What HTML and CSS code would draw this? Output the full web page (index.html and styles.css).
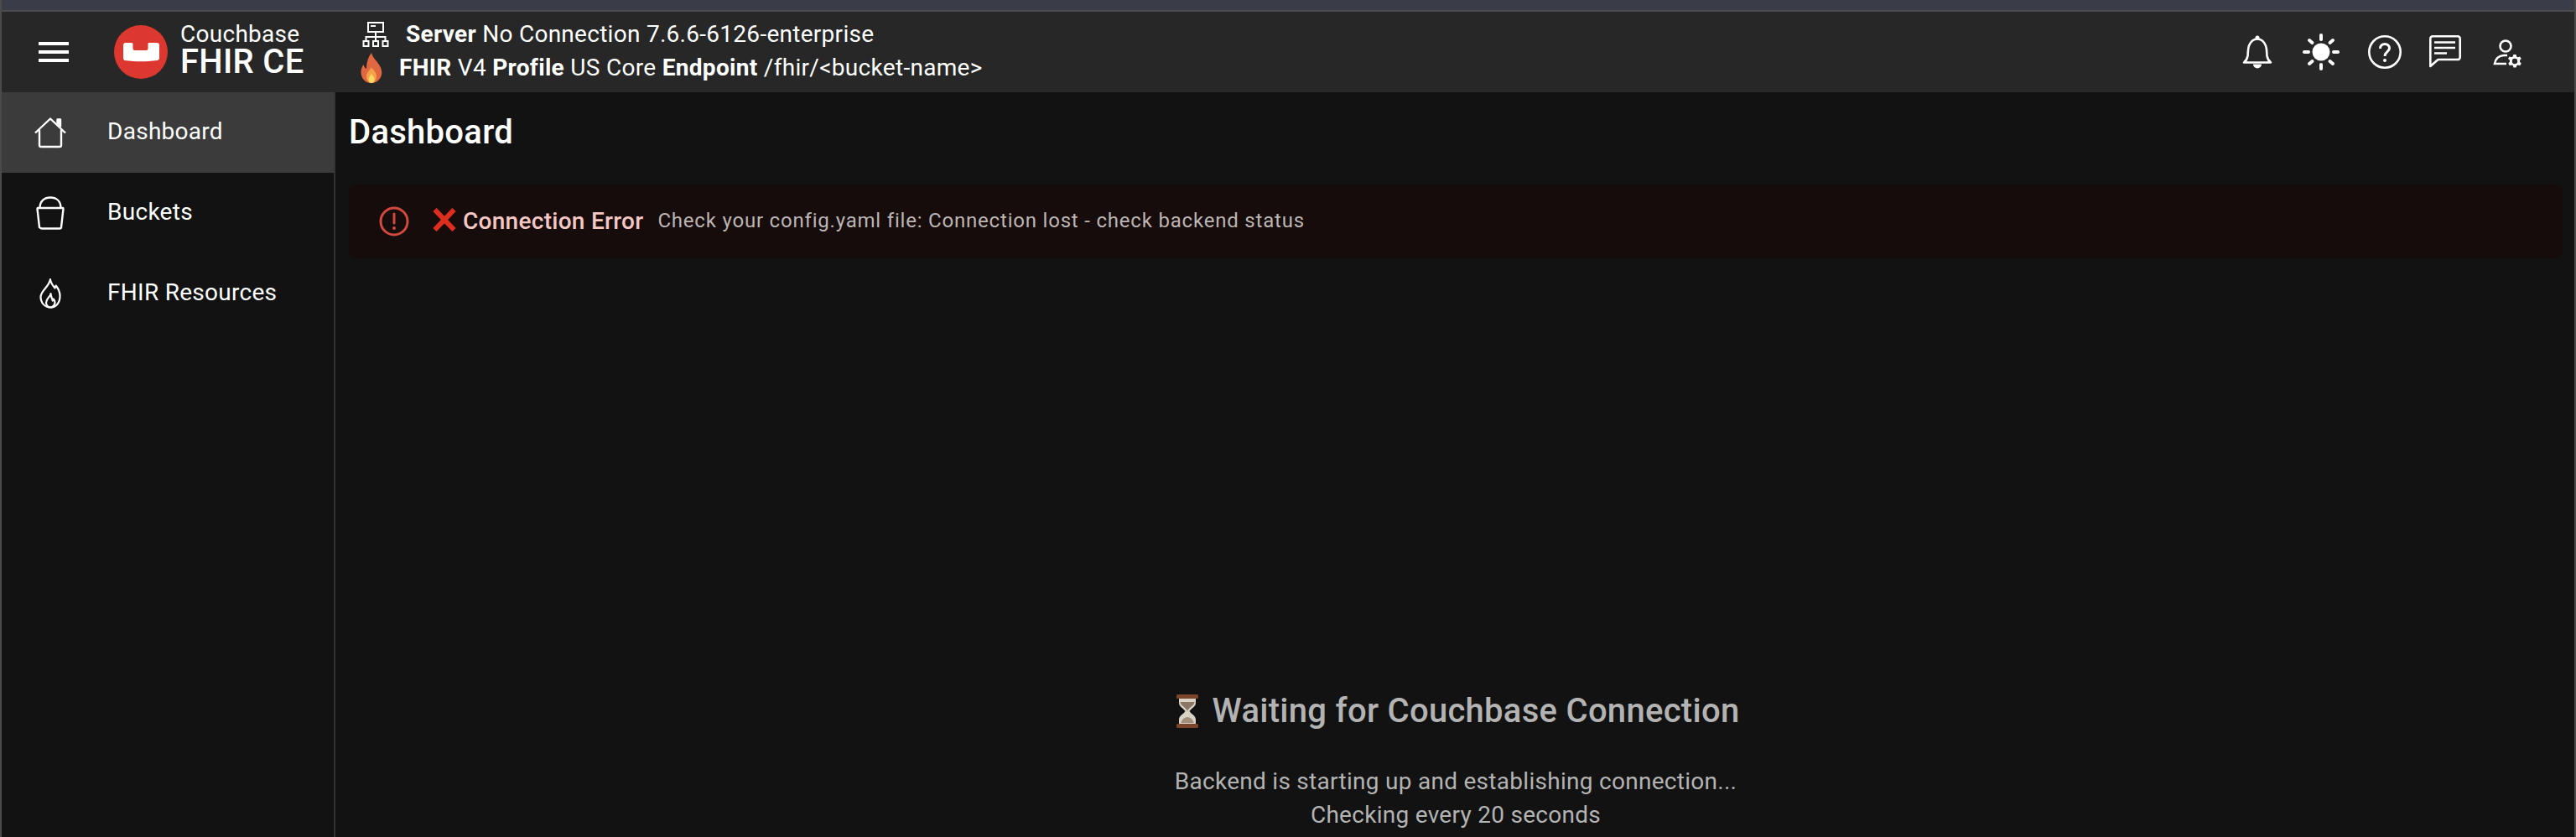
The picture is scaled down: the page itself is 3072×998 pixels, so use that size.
FILE: index.html
```html
<!DOCTYPE html>
<html lang="en">
<head>
<meta charset="utf-8">
<title>Couchbase FHIR CE</title>
<link rel="stylesheet" href="styles.css">
</head>
<body>
<div class="app">
  <div class="window-strip"></div>
  <header class="topbar">
    <button class="burger" aria-label="Menu"><span></span><span></span><span></span></button>
    <svg class="logo" viewBox="0 0 64 64"><circle cx="32" cy="32" r="32" fill="#dc382f"/><path fill="#fff" d="M11 24a3 3 0 0 1 3-3h7a1.500 1.500 0 0 1 1.500 1.500V28a2 2 0 0 0 2 2h14a2 2 0 0 0 2-2v-5.500A1.500 1.500 0 0 1 41 21h10a3 3 0 0 1 3 3v15c0 1.800-1 2.800-2.500 3-6.500 1-13 1.300-19.500 1.300S19 43 12.500 42C12 41.800 11 40.800 11 39z"/></svg>
    <div class="brand"><div class="brand-top">Couchbase</div><div class="brand-main">FHIR CE</div></div>
    <div class="status">
      <div class="status-line first">
        <svg class="srv" viewBox="0 0 32 32" fill="none" stroke="#fff" stroke-width="2"><rect x="7" y="2" width="18" height="11"/><path d="M10 6h6M16 13v6M4.500 24v-5h23v5M16 19v5"/><rect x="1.500" y="24" width="6" height="6"/><rect x="13" y="24" width="6" height="6"/><rect x="24.500" y="24" width="6" height="6"/></svg>
        <span><b>Server</b> No Connection 7.6.6-6126-enterprise</span>
      </div>
      <div class="status-line second">
        <svg class="flame" viewBox="0 0 26 36"><path fill="#e0673f" d="M13 0c1.500 6 6 9 9 14 3.500 5.500 4 10 2.500 14-2 5-6.500 8-11.500 8S3.500 33.500 1.500 28.500C-.5 23.500.5 18 3.500 14c.5 2 1.500 4 3.500 5C7 12 9 5 13 0z"/><path fill="#f4a24a" d="M13 17c1.500 3 6 6 6 11 0 4.500-3 8-6 8s-6-3.500-6-8c0-5 4-7 6-11z"/><path fill="#fbd862" d="M13 25c1 2 3.500 3.500 3.500 6.500S15 36 13 36s-3.500-2-3.500-4.500S12 27 13 25z"/></svg>
        <span><b>FHIR</b> V4 <b>Profile</b> US Core <b>Endpoint</b> /fhir/&lt;bucket-name&gt;</span>
      </div>
    </div>
    <div class="actions">
      <svg viewBox="0 0 48 48" fill="none" stroke="#fff" stroke-width="2.600"><path d="M8 36.500c2.500-2 4-4.500 4.500-8 .5-5 0-8 1.500-12C16 11.500 19.500 8.500 24 8.500S32 11.500 34 16.500c1.500 4 1 7 1.500 12 .5 3.500 2 6 4.500 8z" stroke-linejoin="round"/><circle cx="24" cy="7" r="2.500" fill="#fff" stroke="none"/><path d="M19 38.500h10a5 5 0 0 1-10 0z" fill="#fff" stroke="none"/></svg>
      <svg viewBox="0 0 48 48" fill="#fff"><circle cx="24" cy="24" r="10.500"/><g stroke="#fff" stroke-width="4" stroke-linecap="round"><path d="M24 4v5M24 39v5M4 24h5M39 24h5M10 10l3.500 3M34.500 35l3.500 3M38 10 34.500 13M13.500 35 10 38"/></g></svg>
      <svg viewBox="0 0 48 48" fill="none" stroke="#fff" stroke-width="2.600"><circle cx="24" cy="24" r="18.700"/><path d="M18.500 20c0-3.500 2.500-5.500 5.500-5.500s5.500 2 5.500 5c0 4-5.500 4.500-5.500 9.500" stroke-width="3"/><circle cx="24" cy="34" r="2" fill="#fff" stroke="none"/></svg>
      <svg viewBox="0 0 48 48" fill="none" stroke="#fff" stroke-width="2.600"><path d="M5 5.300h30a2.700 2.700 0 0 1 2.700 2.700v22.300a2.700 2.700 0 0 1-2.700 2.700H11.500L2.300 41V8A2.700 2.700 0 0 1 5 5.300z" stroke-linejoin="round"/><path d="M7 12.500h25M7 19h25M7 25.500h15"/></svg>
      <svg viewBox="0 0 48 48" fill="none" stroke="#fff" stroke-width="2.600"><circle cx="16" cy="17" r="6.500"/><path d="M18 28h-4c-6 .5-10 3.500-11 10h14"/><path fill="#fff" stroke="none" fill-rule="evenodd" transform="translate(27 35) scale(.8) translate(-33 -32)" d="M31 22h4l.7 3 2 1 3-1 2 3.400-2.200 2.100v2.500l2.200 2.100-2 3.400-3-1-2 1-.7 3h-4l-.7-3-2-1-3 1-2-3.400 2.200-2.100v-2.500L23 28.400l2-3.400 3 1 2-1zM33 28a4 4 0 1 0 0 8 4 4 0 0 0 0-8z"/></svg>
    </div>
  </header>
  <div class="body">
    <nav class="sidebar">
      <a class="nav-item active">
        <svg viewBox="0 0 40 40" fill="none" stroke="#fff" stroke-width="2.400" stroke-linejoin="round"><path d="M2 20.500 20 3.500 38 20.500M7 17v18a2 2 0 0 0 2 2h22a2 2 0 0 0 2-2V17"/><path d="M28.500 10V4.500h3.500v9" fill="#fff"/></svg>
        <span>Dashboard</span>
      </a>
      <a class="nav-item">
        <svg viewBox="0 0 40 40" fill="none" stroke="#fff" stroke-width="2.400" stroke-linejoin="round"><path d="M7.500 14C7.500 5.500 13 1.500 20 1.500S32.500 5.500 32.500 14"/><path d="M5 14h30c.5 0 .5.500.5 1l-2.500 22c0 1-1 1.500-2 1.500H10C9 38.500 8 38 7 37L4.500 15c0-.5 0-1 .5-1z"/></svg>
        <span>Buckets</span>
      </a>
      <a class="nav-item">
        <svg viewBox="0 0 40 40" fill="none" stroke="#fff" stroke-width="2.200" stroke-linejoin="round"><path d="M20 3c.5 5 3.500 8 5.500 10.500.5-1 1-2 1.200-3C29.500 14 31.500 18 31.500 23c0 8.500-5 13.500-11.500 13.500S8.500 31 8.500 24C8.500 17 18.500 12 20 3z"/><path d="M20.500 20c0 4-5.500 5.500-5.500 11 0 3 2.500 5.500 5 5.500s5.500-2.500 5.500-5.500c0-1.500-.7-3.500-1.700-4.500l-1 2c-.8-3-2.300-5.500-2.300-8.500z"/></svg>
        <span>FHIR Resources</span>
      </a>
    </nav>
    <main class="main">
      <h1 class="title">Dashboard</h1>
      <section class="alert">
        <svg class="alert-icon" viewBox="0 0 36 36" fill="none" stroke="#d2493d" stroke-width="3"><circle cx="18" cy="18" r="16"/><path d="M18 9v11" stroke-linecap="round"/><circle cx="18" cy="26" r="2" fill="#d2493d" stroke="none"/></svg>
        <svg class="alert-x" viewBox="0 0 28 28" fill="none" stroke="#dd2e1f" stroke-width="6"><path d="M2.500 2 25.500 26M25.500 2 2.500 26"/></svg>
        <strong class="alert-title">Connection Error</strong>
        <span class="alert-text">Check your config.yaml file: Connection lost - check backend status</span>
      </section>
      <section class="waiting">
        <h2 class="waiting-title">
          <svg class="hourglass" viewBox="0 0 28 40"><path fill="#d9d2c6" d="M4 4h20v6c0 5-6 7-7.500 10C18 23 24 25 24 30v6H4v-6c0-5 6-7 7.500-10C10 17 4 15 4 10z"/><path fill="#8b7765" d="M5.500 9h17c0 4-6 6-8.500 10.500C11.500 15 5.500 13 5.500 9z"/><path fill="#a38f7a" d="M14 27c3 0 7 3 7.500 7h-15c.5-4 4.500-7 7.500-7z"/><rect x="1" y="0" width="26" height="5" rx="1.500" fill="#7a452a"/><rect x="1" y="35" width="26" height="5" rx="1.500" fill="#7a452a"/></svg>
          <span>Waiting for Couchbase Connection</span>
        </h2>
        <p class="waiting-text">Backend is starting up and establishing connection...<br>Checking every 20 seconds</p>
      </section>
    </main>
  </div>
</div>
</body>
</html>
```

FILE: styles.css
```css
* { box-sizing: border-box; }
html, body { margin: 0; height: 100%; overflow: hidden; background: #121212; }
body { font-family: Roboto, "Liberation Sans", sans-serif; color: #fff; letter-spacing: 0.28px; }
.app { height: 998px; overflow: hidden; display: flex; flex-direction: column; border-left: 2px solid #4a4a4a; border-right: 2px solid #4a4a4a; }
.window-strip { height: 14px; background: #3a3d47; border-bottom: 2px solid #4b4b4e; margin: 0 -2px; flex: none; }
.topbar { height: 96px; flex: none; background: #272727; display: flex; align-items: center; }
.burger { width: 36px; height: 24px; margin-left: 44px; padding: 0; border: 0; background: none; display: flex; flex-direction: column; justify-content: space-between; flex: none; }
.burger span { display: block; height: 4px; background: #fff; }
.logo { width: 64px; height: 64px; margin-left: 54px; flex: none; }
.brand { margin-left: 15px; margin-top: -3px; width: 198px; flex: none; }
.brand-top { font-size: 28px; line-height: 26px; }
.brand-main { font-size: 40px; line-height: 40px; font-weight: 500; }
.status { margin-left: 15px; font-size: 28px; line-height: 40px; }
.status b { font-weight: 700; }
.status-line { display: flex; align-items: center; height: 40px; white-space: nowrap; }
.status-line.first { margin-top: -2px; }
.status-line.second { letter-spacing: 0.31px; }
.srv { width: 32px; height: 32px; margin-left: 4px; margin-right: 20px; flex: none; }
.flame { width: 26px; height: 36px; margin-left: 2px; margin-right: 20px; flex: none; }
.actions { margin-left: auto; margin-right: 50px; display: flex; gap: 28px; align-items: center; }
.actions svg { width: 48px; height: 48px; display: block; }
.body { flex: 1; display: flex; min-height: 0; }
.sidebar { flex: none; background: #121212; border-right: 2px solid #333; box-sizing: content-box; width: 396px; display: flex; flex-direction: column; }
.nav-item { height: 96px; display: flex; align-items: center; padding-left: 38px; padding-bottom: 3px; font-size: 28px; color: #fff; }
.nav-item svg { width: 40px; height: 40px; margin-top: 3px; margin-right: 48px; flex: none; }
.nav-item.active { background: #3b3b3b; }
.main { flex: 1; min-width: 0; padding: 0 14px 0 16px; }
.title { margin: 24px 0 0; font-size: 40px; line-height: 48px; font-weight: 500; }
.alert { margin-top: 38px; height: 88px; background: #160c0b; border-radius: 8px; display: flex; align-items: center; padding-left: 36px; padding-bottom: 2px; }
.alert-icon { width: 36px; height: 36px; margin-top: 2px; flex: none; }
.alert-x { width: 28px; height: 28px; margin-left: 28px; margin-bottom: 3px; flex: none; }
.alert-title { font-size: 28px; font-weight: 500; color: #f4c7c3; margin-left: 8px; }
.alert-text { font-size: 24px; letter-spacing: 0.8px; color: #bdb5b4; margin-left: 17px; }
.waiting { margin-top: 516px; text-align: center; color: #b3b3b3; }
.waiting-title { margin: 0; font-size: 40px; line-height: 48px; font-weight: 500; display: flex; justify-content: center; align-items: center; gap: 16px; margin-left: 4px; }
.hourglass { width: 28px; height: 40px; flex: none; }
.waiting-text { margin: 40px 0 0; font-size: 28px; line-height: 40px; }
```
